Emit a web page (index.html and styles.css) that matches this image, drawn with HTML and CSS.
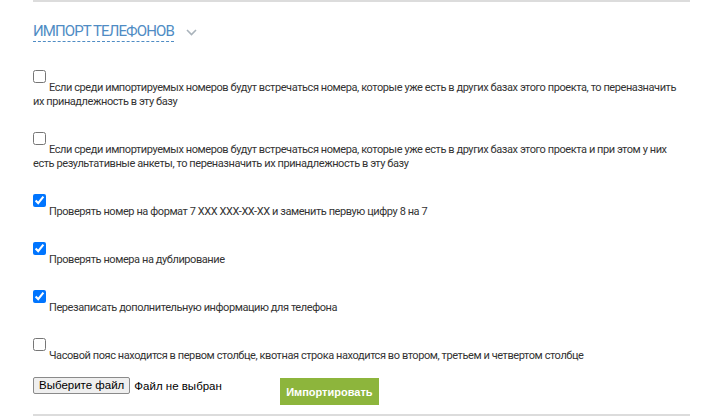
FILE: index.html
```html
<!DOCTYPE html>
<html lang="ru">
<head>
<meta charset="utf-8">
<link rel="stylesheet" href="styles.css">
</head>
<body>
<div class="panel">
  <div class="title-row">
    <span class="title">ИМПОРТ ТЕЛЕФОНОВ</span>
    <svg class="chevron" width="11" height="7" viewBox="0 0 11 7"><path d="M1 1 L5.5 5.5 L10 1" fill="none" stroke="#a9b3bb" stroke-width="1.6"/></svg>
  </div>
  <div class="options">
    <label class="opt"><input type="checkbox">Если среди импортируемых номеров будут встречаться номера, которые уже есть в других базах этого проекта, то переназначить их принадлежность в эту базу</label>
    <label class="opt"><input type="checkbox">Если среди импортируемых номеров будут встречаться номера, которые уже есть в других базах этого проекта и при этом у них есть результативные анкеты, то переназначить их принадлежность в эту базу</label>
    <label class="opt"><input type="checkbox" checked>Проверять номер на формат 7 XXX XXX-XX-XX и заменить первую цифру 8 на 7</label>
    <label class="opt"><input type="checkbox" checked>Проверять номера на дублирование</label>
    <label class="opt"><input type="checkbox" checked>Перезаписать дополнительную информацию для телефона</label>
    <label class="opt"><input type="checkbox">Часовой пояс находится в первом столбце, квотная строка находится во втором, третьем и четвертом столбце</label>
  </div>
  <div class="actions">
    <div class="file">
      <span class="file-btn">Выберите файл</span>
      <span class="file-name">Файл не выбран</span>
    </div>
    <button class="import-btn" type="button">Импортировать</button>
  </div>
</div>
</body>
</html>
```

FILE: styles.css
```css
html, body {
  margin: 0;
  padding: 0;
  background: #ffffff;
}
.panel {
  margin-left: 33px;
  width: 657px;
  border-top: 2px solid #dcdcdc;
  border-bottom: 2px solid #dcdcdc;
  font-family: Roboto, "Noto Sans", sans-serif;
  color: #333333;
}
.title-row {
  display: flex;
  align-items: center;
  margin-top: 19px;
  height: 21px;
}
.title {
  font-family: Roboto, "Noto Sans", sans-serif;
  font-size: 15px;
  line-height: 20px;
  color: #4f8cc4;
  border-bottom: 1px dashed #4f8cc4;
  letter-spacing: -0.9px;
}
.chevron {
  margin-left: 12px;
  margin-top: 1px;
}
.options {
  margin-top: 28px;
  max-width: 648px;
}
.opt {
  display: block;
  font-size: 11px;
  line-height: 14px;
  letter-spacing: -0.42px;
  margin-bottom: 23px;
}
.opt input {
  width: 13px;
  height: 13px;
  margin: 0 3px 0 0;
  vertical-align: 8px;
}
.actions {
  display: flex;
  align-items: flex-start;
  margin-top: -9px;
  padding-bottom: 9px;
}
.file {
  display: flex;
  align-items: center;
  font-family: "Liberation Sans", Arial, sans-serif;
  font-size: 11.5px;
  color: #000;
}
.file-btn {
  display: inline-block;
  box-sizing: border-box;
  height: 17px;
  line-height: 15px;
  padding: 0 5px;
  background: #efefef;
  border: 1px solid #8a8a8a;
  border-radius: 2px;
}
.file-name {
  margin-left: 4px;
}
.import-btn {
  margin-left: 58px;
  margin-top: 1px;
  width: 99px;
  height: 27px;
  border: none;
  background: #8db53c;
  color: #ffffff;
  font-family: "Liberation Sans", Arial, sans-serif;
  font-weight: bold;
  font-size: 11px;
  padding: 0;
}
```
